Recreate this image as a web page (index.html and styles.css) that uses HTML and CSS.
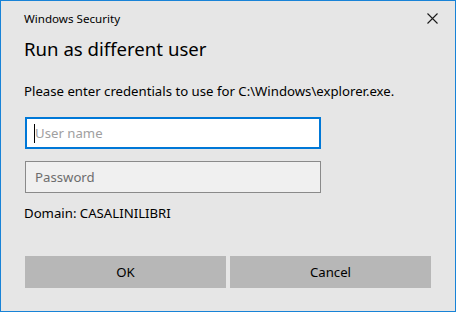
FILE: index.html
```html
<!DOCTYPE html>
<html lang="en">
<head>
  <meta charset="UTF-8">
  <title>Windows Security</title>
  <link rel="stylesheet" href="styles.css">
</head>
<body>

<div class="dialog">
  <div class="titlebar">
    <span class="app-name">Windows Security</span>
    <button class="close" aria-label="Close">
      <svg width="11" height="11" viewBox="0 0 11 11">
        <path d="M0.5 0.5 L10.5 10.5 M10.5 0.5 L0.5 10.5" stroke="#1a1a1a" stroke-width="1.1" fill="none"/>
      </svg>
    </button>
  </div>

  <h1 class="heading">Run as different user</h1>

  <p class="prompt">Please enter credentials to use for C:\Windows\explorer.exe.</p>

  <form class="creds">
    <div class="field-wrap">
      <input type="text" class="field field-focus" placeholder="User name">
      <span class="caret"></span>
    </div>
    <input type="password" class="field" placeholder="Password">
  </form>

  <p class="domain">Domain: CASALINILIBRI</p>

  <div class="actions">
    <button class="btn">OK</button>
    <button class="btn">Cancel</button>
  </div>
</div>

</body>
</html>
```

FILE: styles.css
```css
body {
  margin: 0;
  padding: 0;
  background: #e6e6e6;
  font-family: 'Noto Sans', 'Open Sans', sans-serif;
  color: #000;
}
.dialog {
  width: 456px;
  height: 312px;
  box-sizing: border-box;
  border: 1px solid #1883d7;
  background: #e6e6e6;
  padding: 0 23px;
  display: flex;
  flex-direction: column;
}
.titlebar {
  display: flex;
  justify-content: space-between;
  align-items: center;
  height: 34px;
}
.app-name {
  font-size: 11.6px;
  color: #000;
}
.close {
  background: none;
  border: none;
  padding: 0;
  margin-right: -6px;
  width: 11px;
  height: 11px;
  display: flex;
}
.heading {
  margin: 0;
  font-size: 18.6px;
  font-weight: 400;
  line-height: 28px;
}
.prompt {
  margin: 20px 0 0;
  font-size: 13.2px;
  line-height: 17px;
}
.creds {
  display: flex;
  flex-direction: column;
  gap: 12px;
  margin-top: 17px;
}
.field-wrap {
  position: relative;
  display: flex;
}
.caret {
  position: absolute;
  left: 10px;
  top: 7px;
  width: 1px;
  height: 19px;
  background: #000;
}
.field {
  width: 296px;
  height: 32px;
  box-sizing: border-box;
  margin: 0 0 0 1px;
  padding: 0 9px;
  border: 1px solid #8a8a8a;
  background: #f0f0f0;
  font-family: inherit;
  font-size: 13.2px;
  color: #000;
  outline: none;
}
.field::placeholder {
  color: #6d6d6d;
}
.field-focus {
  padding: 0 8px;
  border: 2px solid #0078d7;
  background: #fff;
}
.field-focus::placeholder {
  color: #a0a0a0;
}
.domain {
  margin: 12px 0 0;
  font-size: 13.2px;
  line-height: 17px;
}
.actions {
  display: flex;
  gap: 4px;
  margin-top: 34px;
  padding-left: 1px;
}
.btn {
  width: 201px;
  height: 32px;
  border: none;
  background: #b7b7b7;
  font-family: inherit;
  font-size: 13.2px;
  color: #000;
}
```
